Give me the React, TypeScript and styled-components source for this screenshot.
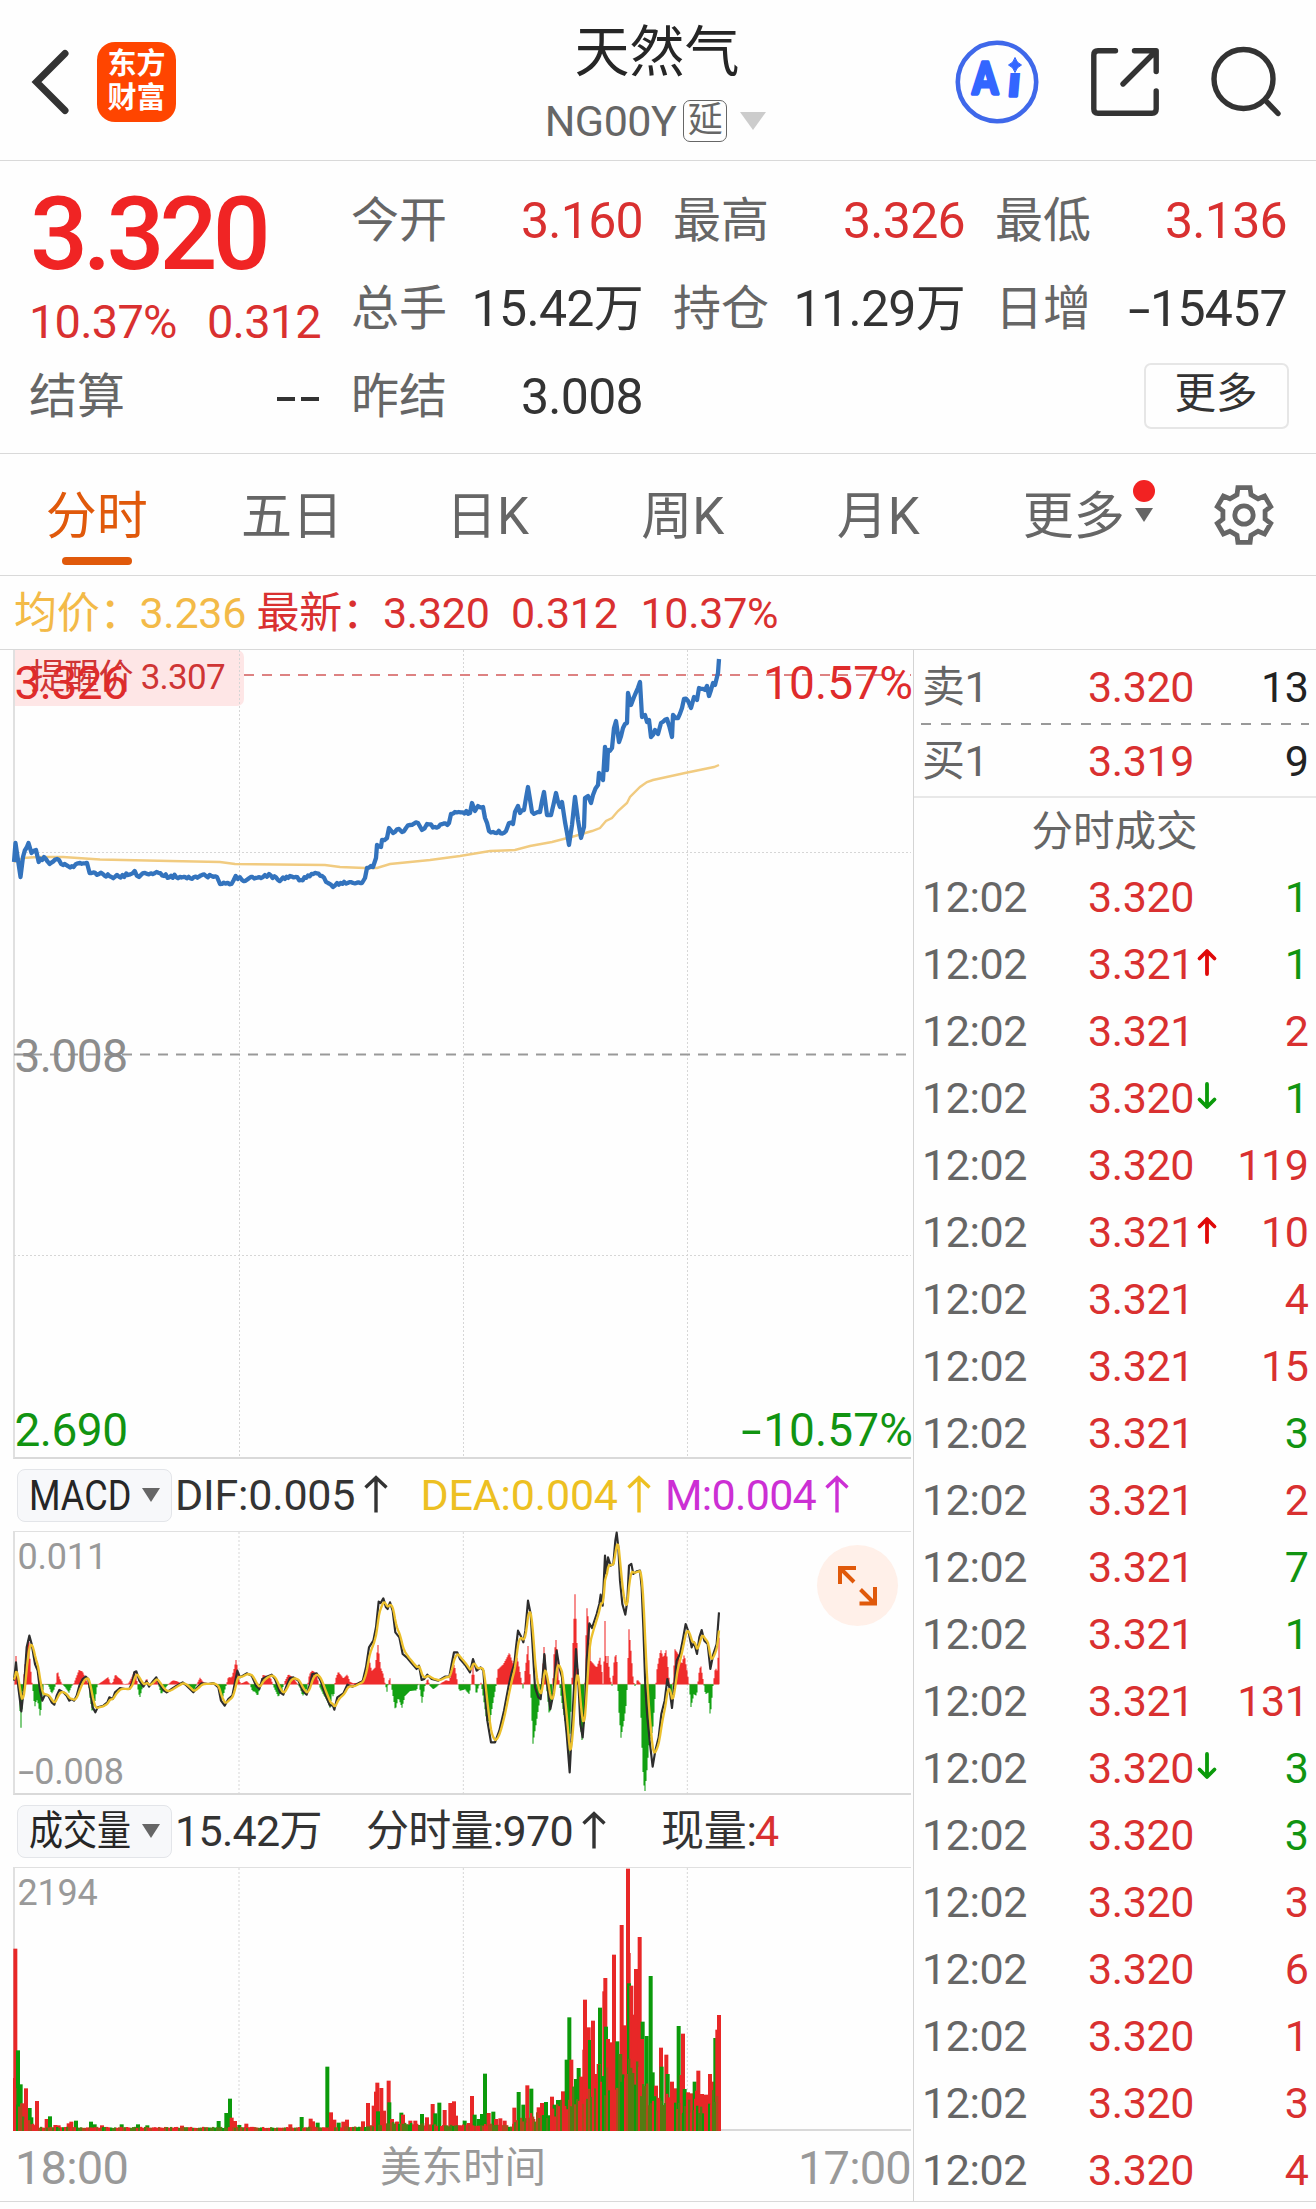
import React from "react";
import styled, { createGlobalStyle } from "styled-components";

const RED = "#d93030";
const GREEN = "#119411";
const INK = "#333333";
const GRAY = "#666666";
const MUTED = "#999999";
const ORANGE = "#e0590b";
const LINE = "#d9d9d9";

const GlobalStyle = createGlobalStyle`
  * { box-sizing: border-box; }
  html, body { margin: 0; background: #fefefe; }
  body { font-family: Roboto, "Noto Sans CJK SC", sans-serif; color: ${INK}; }
`;

const Page = styled.main`
  width: 1316px;
  height: 2209px;
  overflow: hidden;
  background: #fefefe;
`;

/* ---------- header ---------- */

const Header = styled.header`
  display: grid;
  grid-template-columns: 1fr auto 1fr;
  height: 161px;
  border-bottom: 1px solid ${LINE};
`;

const HeaderSide = styled.div<{ $end?: boolean }>`
  display: flex;
  align-items: center;
  justify-content: ${(p) => (p.$end ? "flex-end" : "flex-start")};
  gap: ${(p) => (p.$end ? "52px" : "28.5px")};
  padding: ${(p) => (p.$end ? "3px 35px 0 0" : "3px 0 0 30.5px")};
`;

const Brand = styled.div`
  display: flex;
  flex-direction: column;
  align-items: center;
  justify-content: center;
  width: 79px;
  height: 80px;
  padding-bottom: 1px;
  border-radius: 18px;
  background: #ff4500;
  color: #fff;
  font-size: 29px;
  font-weight: 700;
  line-height: 34px;
`;

const Titles = styled.div`
  display: flex;
  flex-direction: column;
  align-items: center;
  padding-top: 17px;
`;

const Title = styled.h1`
  margin: 0 2px 0 0;
  font-size: 55px;
  font-weight: 400;
  line-height: 70px;
  color: #262626;
`;

const Symbol = styled.div`
  display: flex;
  align-items: center;
  height: 68px;
  margin-right: 5px;
  font-size: 43px;
  line-height: 68px;
  letter-spacing: -0.5px;
  color: ${GRAY};
`;

const DelayTag = styled.span`
  display: flex;
  align-items: center;
  justify-content: center;
  width: 44px;
  height: 42px;
  margin: 0 13px 0 7px;
  border: 1.5px solid ${GRAY};
  border-radius: 7px;
  font-size: 35px;
  line-height: 38px;
  letter-spacing: 0;
`;

/* ---------- quote ---------- */

const Quote = styled.section`
  display: grid;
  grid-template-columns: repeat(4, 292px);
  grid-template-rows: repeat(3, 88px);
  column-gap: 30px;
  height: 293px;
  padding: 16px 0 0 29px;
  border-bottom: 1px solid ${LINE};
`;

const Headline = styled.div`
  grid-row: span 2;
`;

const LastPrice = styled.div`
  padding: 7px 0 0 1px;
  font-size: 102px;
  font-weight: 500;
  line-height: 100px;
  letter-spacing: -4.9px;
  color: #f02424;
  white-space: nowrap;
`;

const ChangeRow = styled.div`
  display: flex;
  justify-content: space-between;
  font-size: 47px;
  line-height: 76px;
  letter-spacing: -0.8px;
  color: ${RED};
`;

const Stat = styled.div<{ $color?: string }>`
  display: flex;
  align-items: center;
  justify-content: space-between;
  font-size: 50px;
  line-height: 88px;
  letter-spacing: -0.7px;
  color: ${(p) => p.$color ?? INK};
  white-space: nowrap;
`;

const StatLabel = styled.span`
  font-size: 48px;
  letter-spacing: 0;
  color: ${GRAY};
`;

const Hyphen = styled.span`
  display: inline-block;
  margin: 0 1px 0 8px;
  transform: scaleX(1.6);
  transform-origin: 100% 50%;
`;

const Dashes = styled.span`
  display: flex;
  gap: 6px;
  padding: 4px 2px 0 0;
  &::before,
  &::after {
    content: "";
    width: 18px;
    height: 4px;
    background: ${INK};
  }
`;

const MoreButton = styled.button`
  grid-column: 4;
  justify-self: end;
  align-self: center;
  width: 145px;
  height: 66px;
  margin: 0 -1.5px 2px 0;
  padding: 0 0 4px;
  border: 2px solid #e6e6e6;
  border-radius: 7px;
  background: #fefefe;
  font: 400 41.5px/56px Roboto, "Noto Sans CJK SC", sans-serif;
  color: ${INK};
`;

/* ---------- tabs ---------- */

const Tabs = styled.nav`
  display: flex;
  height: 122px;
  border-bottom: 1px solid ${LINE};
`;

const Tab = styled.div<{ $active?: boolean }>`
  position: relative;
  display: flex;
  align-items: center;
  justify-content: center;
  width: 195.4px;
  padding: 0 2px 5px 0;
  font-size: 51px;
  color: ${(p) => (p.$active ? ORANGE : GRAY)};
  &::after {
    content: "";
    display: ${(p) => (p.$active ? "block" : "none")};
    position: absolute;
    bottom: 10px;
    left: 62px;
    width: 70px;
    height: 8px;
    border-radius: 4px;
    background: ${ORANGE};
  }
`;

const TabMark = styled.svg`
  position: absolute;
  left: 155px;
  top: 25px;
`;

const SettingsTab = styled.div`
  display: flex;
  align-items: center;
  padding-left: 41px;
`;

/* ---------- average / latest line ---------- */

const Legend = styled.div`
  display: flex;
  height: 74px;
  padding-left: 14px;
  border-bottom: 1px solid ${LINE};
  font-size: 43px;
  line-height: 74px;
  letter-spacing: -0.3px;
  white-space: pre;
`;

const LegendItem = styled.span<{ $color: string; $width: number }>`
  width: ${(p) => p.$width}px;
  color: ${(p) => p.$color};
`;

/* ---------- body ---------- */

const Body = styled.section`
  display: flex;
  height: 1552px;
  border-bottom: 1.5px solid ${LINE};
`;

const Charts = styled.div`
  width: 914px;
  padding-left: 13px;
  border-right: 1px solid #d4d4d4;
`;

const Pane = styled.div<{ $h: number }>`
  position: relative;
  width: 898px;
  height: ${(p) => p.$h}px;
  border-left: 2px solid #e0e0e0;
  border-bottom: 2px solid ${LINE};
  border-top: ${(p) => (p.$h < 300 ? "1px solid #e0e0e0" : "none")};
`;

const Plot = styled.svg`
  position: absolute;
  left: -1px;
  top: 0;
  overflow: visible;
`;

const PaneLabel = styled.span<{ $top: number; $right?: boolean; $color: string; $small?: boolean }>`
  position: absolute;
  top: ${(p) => p.$top}px;
  ${(p) => (p.$right ? "right: -2px" : `left: ${p.$small ? 2.5 : -0.5}px`)};
  font-size: ${(p) => (p.$small ? 36 : 46)}px;
  line-height: 50px;
  letter-spacing: ${(p) => (p.$small ? "-0.2px" : p.$right ? "0.1px" : "-0.5px")};
  color: ${(p) => p.$color};
  white-space: nowrap;
`;

const Reminder = styled.div`
  position: absolute;
  left: 0;
  top: 0;
  width: 229px;
  height: 56px;
  padding-left: 15px;
  border-radius: 0 7px 7px 0;
  background: #fee6e6;
  font-size: 35px;
  line-height: 56px;
  letter-spacing: -0.75px;
  color: #cf3535;
  white-space: pre;
`;

const ExpandButton = styled.button`
  position: absolute;
  left: 802px;
  top: 13px;
  width: 81px;
  height: 81px;
  padding: 0;
  border: 0;
  border-radius: 50%;
  background: #fff0e9;
`;

const IndicatorBar = styled.div`
  display: flex;
  align-items: center;
  height: 72px;
  padding-left: 4px;
  font-size: 43px;
  line-height: 58px;
  letter-spacing: -0.2px;
  white-space: nowrap;
`;

const Picker = styled.button`
  display: flex;
  align-items: center;
  width: 155px;
  height: 53px;
  margin-right: 3px;
  padding: 0 0 0 11px;
  border: 1.5px solid #e3e5e9;
  border-radius: 8px;
  background: #f7f8fa;
  color: #262626;
`;

const PickerText = styled.span<{ $size: number }>`
  width: 112.5px;
  text-align: left;
  font: 400 ${(p) => p.$size}px/46px Roboto, "Noto Sans CJK SC", sans-serif;
  transform: scaleX(0.84);
  transform-origin: 0 50%;
  white-space: nowrap;
`;

const Readout = styled.span<{ $w: number; $color?: string; $tight?: boolean }>`
  display: flex;
  align-items: center;
  width: ${(p) => p.$w}px;
  letter-spacing: ${(p) => (p.$tight ? "-0.7px" : "-0.2px")};
  color: ${(p) => p.$color ?? INK};
`;

const Trend = styled.svg`
  margin: 0 0 2px 8px;
`;

const Axis = styled.div`
  display: flex;
  justify-content: space-between;
  align-items: center;
  width: 898px;
  height: 70px;
  padding: 3px 0 0 2px;
  font-size: 47px;
  line-height: 66px;
  letter-spacing: -0.8px;
  color: ${MUTED};
`;

const AxisTitle = styled.span`
  font-size: 41.5px;
  letter-spacing: 0;
`;

/* ---------- order book & ticks ---------- */

const Side = styled.aside`
  flex: 1;
  height: 1551px;
  overflow: hidden;
  font-size: 43px;
  letter-spacing: -0.4px;
`;

const Row = styled.div<{ $h: number }>`
  display: grid;
  grid-template-columns: 166px 1fr auto;
  align-items: center;
  height: ${(p) => p.$h}px;
  padding: 1px 7.5px 0 8px;
  line-height: 60px;
`;

const Label = styled.span`
  color: ${GRAY};
`;

const Price = styled.span`
  display: flex;
  align-items: center;
  color: ${RED};
`;

const Qty = styled.span<{ $color: string }>`
  color: ${(p) => p.$color};
`;

const TickArrow = styled.svg`
  margin: 0 0 4px -0.5px;
`;

const BookDivider = styled.div`
  height: 2px;
  margin: 0 7px;
  background: repeating-linear-gradient(90deg, #999 0 10px, transparent 10px 20px);
`;

const SideTitle = styled.div`
  height: 67px;
  padding-right: 1px;
  border-top: 2px solid #e8e8e8;
  text-align: center;
  font-size: 41.5px;
  line-height: 67px;
  letter-spacing: 0;
  color: ${GRAY};
`;

/* ---------- data ---------- */

type Pt = [number, number];

const pairs = (s: string): Pt[] =>
  s.trim().split(/\s+/).map((p) => p.split(",").map(Number) as Pt);

const rng = (seed: number) => () => {
  seed = (seed * 16807) % 2147483647;
  return seed / 2147483647;
};

const valueAt = (pts: Pt[], x: number) => {
  let i = 1;
  while (i < pts.length - 1 && pts[i][0] < x) i++;
  const [x0, y0] = pts[i - 1];
  const [x1, y1] = pts[i];
  return y0 + ((y1 - y0) * Math.min(1, Math.max(0, (x - x0) / (x1 - x0))));
};

const toPath = (pts: Pt[]) => "M" + pts.map(([x, y]) => `${x.toFixed(1)} ${y.toFixed(1)}`).join("L");

const PRICE = pairs(`14,862 15.5,843 18,860 20.5,877 23,857 28.5,843 31.5,853 36,850 38.7,862 44,857 49.6,864 57,859 63,865
73.6,867 80,863 87,863 89.6,873 99,874 111.5,877 128,875 134.7,871 139,877 145,873 156.5,872 164,876 185,877 194,877 206,876
217,877 220,884 231.5,884 235.7,876 242,880 252.5,877 261,878 269,874 278,880 290,876 301,880 311.5,874 322,876 328,883
333,887 337,883 362,883 365,878 367,868 373,867 376,858 377,845 381,847 382,840 387,838 389,828 393,833 399,829 402,832
410,825 418,823 422,830 427,824 435,827 449,823 451,814 455,812 470,813 472,803 475,811 478,806 483,807 485,818 489,831
497,833 506,831 509,823 513,824 515,812 518,806 520,813 524,810 528,787 532,812 540,812 544,792 547,815 551,815 556,793
560,807 562,802 565,822 569,845 572,825 575,797 578,820 581,838 584,827 585,798 588,796 591,803 593,795 598,785 599,773
603,780 605,747 607,770 608,750 612,748 614,728 616,721 619,742 623,728 627,723 628,693 631,705 634,697 640,682 642,717
645,715 647,722 649,720 651,737 655,730 658,734 661,723 667,719 672,737 673,715 678,718 682,708 684,699 688,701 691,708
694,697 697,700 699,688 705,690 707,686 709,696 713,683 715,685 718,673 719,659`);

const AVERAGE = pairs(`14,862 23,858 38,857 63,857 100,859.5 170,861 220,862 235,864 325,865 340,867 365,868 377,868 390,864
430,860 460,856 490,851 515,850 530,846 552,842 575,836 592,831 600,828 606,821 612,818 618,811 627,803 630,797 640,787
647,782 653,780 685,773 714,767 719,765`);

const DIF = pairs(`42,720 48,665 55,740 64,812 72,740 80,620 88,585 95,610 105,670 113,690 120,750 127,780 135,762 145,765
155,785 163,792 170,765 178,748 190,755 200,765 208,780 215,775 222,780 230,765 238,735 248,715 257,708 265,715 272,760
278,800 286,815 293,800 310,795 322,785 328,770 338,775 345,755 360,742 375,745 388,745 397,725 403,695 409,692 418,720
430,738 440,722 447,738 460,720 469,710 478,730 490,748 500,755 515,745 530,735 548,725 560,735 580,755 592,740 605,728
625,730 640,727 655,740 663,780 674,795 685,775 697,765 705,725 712,690 720,710 740,698 755,705 768,735 778,745 787,715
800,708 815,702 825,715 840,755 850,762 860,735 870,712 880,710 895,720 908,750 920,762 930,730 937,700 950,698 962,720
975,760 990,795 998,793 1003,807 1012,770 1030,758 1042,732 1058,738 1075,728 1088,722 1098,680 1107,620 1120,600
1128,560 1136,483 1142,487 1150,473 1158,500 1163,505 1170,485 1178,510 1186,575 1198,590 1208,640 1220,650 1235,668
1250,685 1257,675 1265,718 1273,715 1282,702 1295,715 1315,720 1335,708 1348,708 1355,670 1362,635 1372,635 1380,655
1395,672 1410,695 1419,655 1430,690 1442,680 1450,690 1455,760 1462,840 1473,905 1485,905 1498,870 1512,810 1525,740
1535,695 1543,670 1548,620 1554,570 1562,585 1570,605 1576,570 1584,480 1592,520 1598,620 1605,740 1615,770 1622,775
1627,720 1633,640 1640,720 1651,805 1660,760 1670,630 1678,680 1686,710 1692,800 1700,880 1709,995 1715,880 1722,740
1728,625 1735,720 1741,850 1748,890 1755,800 1760,660 1768,548 1776,562 1790,520 1798,490 1802,462 1808,495 1815,345
1819,400 1824,350 1832,375 1840,370 1846,300 1850,276 1855,320 1860,420 1867,490 1876,522 1882,480 1887,375 1894,370
1900,400 1910,392 1920,390 1925,440 1930,560 1936,740 1942,830 1950,910 1958,978 1966,930 1976,890 1984,820 1994,780
2002,715 2008,740 2016,802 2022,740 2030,660 2040,640 2048,600 2057,550 2066,575 2075,620 2082,605 2091,640 2098,590
2105,568 2113,600 2123,610 2131,685 2140,640 2150,610 2157,515`);

const HISTOGRAM = pairs(`42,0 48,85 53,10 57,-30 63,-130 69,-20 72,30 80,110 86,145 91,60 96,5 98,-10 104,-70 110,-45 115,-60
121,-100 127,-30 132,0 145,-2 155,-28 163,-15 168,5 172,43 178,20 185,3 195,-8 207,-25 215,-5 222,3 230,25 237,43 248,38
258,15 266,0 270,-40 277,-85 285,-50 292,-2 300,4 312,12 325,22 331,2 338,4 346,30 355,20 364,14 370,0 385,2 395,20 404,42
410,20 413,-10 419,-42 426,-15 432,0 440,18 446,2 455,3 468,20 475,0 484,-30 495,-12 505,0 518,12 530,10 545,2 560,-2
580,-25 590,0 600,20 610,6 640,0 655,-5 662,-45 668,-40 678,-5 685,22 695,20 703,50 709,78 715,20 722,2 740,10 750,0
757,-20 765,-22 773,-35 780,-10 788,28 800,25 812,20 820,-5 835,-38 845,-20 855,10 865,30 880,20 890,5 900,-10 908,-35
920,-20 928,30 937,42 950,30 958,-5 970,-30 982,-50 990,-70 996,-30 1001,-40 1006,15 1015,38 1030,18 1042,30 1050,8
1060,3 1075,5 1090,15 1098,40 1108,75 1115,40 1125,50 1134,118 1142,50 1150,30 1156,0 1161,-22 1166,10 1170,18 1175,-10
1186,-78 1195,-40 1206,-70 1215,-35 1230,-20 1250,-18 1256,5 1259,-10 1266,-55 1275,-5 1283,18 1290,-5 1300,-15 1315,-3
1325,5 1338,12 1348,10 1356,45 1363,60 1372,10 1378,-20 1395,-15 1408,-30 1414,5 1419,65 1424,5 1429,-32 1436,-5 1443,5
1450,-40 1460,-110 1470,-110 1480,-50 1488,-5 1494,45 1510,60 1528,95 1540,60 1547,95 1555,65 1563,20 1570,-18 1575,40
1584,115 1590,30 1593,-40 1599,-178 1610,-110 1622,-30 1627,30 1633,128 1640,-10 1648,-95 1657,-30 1662,90 1669,140
1676,20 1685,-50 1695,-110 1707,-215 1714,-60 1718,100 1725,270 1732,100 1738,-60 1745,-175 1753,-110 1757,120 1761,228
1767,180 1773,70 1790,50 1800,80 1807,30 1810,-12 1815,190 1819,50 1824,85 1830,20 1837,-8 1841,60 1847,95 1852,60
1855,-60 1863,-160 1872,-110 1880,-50 1883,50 1887,165 1894,90 1900,10 1906,-8 1912,15 1920,5 1923,-100 1928,-250
1934,-330 1940,-270 1948,-170 1958,-140 1966,-30 1970,40 1982,105 1990,80 1999,105 2007,20 2015,-65 2021,40 2025,105
2035,90 2045,60 2053,90 2063,30 2068,-5 2073,-68 2082,-30 2090,-35 2096,30 2102,60 2110,10 2116,-30 2124,-25 2131,-98
2139,-5 2146,50 2152,40 2157,140`);

const VOLUME = `r39,862 r40,474 g48,779 g56,881 r62,938 g83,952 r72,893 g88,980 r105,931 r134,985 g144,977 r160,1003 r170,1004
r200,998 r208,993 g222,990 g267,993 g278,1001 r300,1004 g359,1001 g408,1001 g436,1004 r540,1005 g650,991 g673,967 g684,924
r689,981 r699,991 g712,1003 r733,999 r865,1001 g899,979 r926,984 r933,992 g947,996 g976,828 r987,965 r997,987 g1010,996
r1024,993 r1035,987 r1083,992 r1098,937 r1115,945 r1122,903 r1126,876 r1138,892 g1128,962 r1146,960 r1160,870 g1162,935
r1170,985 r1185,993 g1198,966 r1203,972 r1225,990 r1240,990 g1260,970 r1275,980 r1292,940 g1300,968 g1312,936 r1328,958
r1345,937 r1356,932 r1362,975 g1388,990 r1400,997 r1410,916 g1418,972 g1430,985 g1440,970 g1449,849 r1460,967 g1474,963
r1482,985 r1495,983 r1508,990 r1537,951 g1550,904 g1564,942 r1576,884 g1588,894 r1594,985 r1610,950 r1620,937 g1632,934
r1650,918 g1658,942 g1668,928 r1683,902 g1694,807 g1702,680 r1708,807 g1722,865 g1730,832 r1738,858 r1747,777 r1749,627
r1760,710 g1764,748 r1773,690 r1782,850 g1794,651 r1790,820 r1807,602 r1810,562 g1812,708 r1818,745 r1828,755 r1836,492
g1846,752 r1859,403 m1855,790 r1868,704 r1878,234 r1880,487 g1881,578 r1888,585 r1895,672 r1902,535 r1913,439 g1922,693
r1920,745 g1934,736 g1946,556 g1952,845 r1962,885 r1977,771 g1979,828 r1993,792 g1997,850 r2010,873 r2022,893 g2030,706
r2039,853 r2043,729 g2048,895 r2058,905 r2070,908 g2078,873 r2085,900 r2089,840 r2100,910 r2112,912 r2124,850 r2132,873
g2140,742 r2146,717 r2151,673`
  .split(/\s+/)
  .map((s) => {
    const [x, y] = s.slice(1).split(",").map(Number);
    return { tone: s[0], x, y };
  });

const VOLUME_FLOOR = pairs(`42,130 60,90 90,25 110,12 900,12 1100,15 1180,28 1330,18 1500,22 1530,15 1560,45 1640,60 1690,110 1730,130
1770,190 1840,200 1900,200 1950,140 1980,105 2100,95 2157,130`);

const TONES: Record<string, string> = { r: "#e82727", g: "#0b9a0b", m: "#557a12", d: "#b04a1c" };

const TICKS: [string, string, string, "r" | "g"][] = [
  ["3.320", "", "1", "g"],
  ["3.321", "up", "1", "g"],
  ["3.321", "", "2", "r"],
  ["3.320", "down", "1", "g"],
  ["3.320", "", "119", "r"],
  ["3.321", "up", "10", "r"],
  ["3.321", "", "4", "r"],
  ["3.321", "", "15", "r"],
  ["3.321", "", "3", "g"],
  ["3.321", "", "2", "r"],
  ["3.321", "", "7", "g"],
  ["3.321", "", "1", "g"],
  ["3.321", "", "131", "r"],
  ["3.320", "down", "3", "g"],
  ["3.320", "", "3", "g"],
  ["3.320", "", "3", "r"],
  ["3.320", "", "6", "r"],
  ["3.320", "", "1", "r"],
  ["3.320", "", "3", "r"],
  ["3.320", "", "4", "r"],
];

/* ---------- drawings ---------- */

function PriceChart() {
  const rand = rng(11);
  const line: Pt[] = [];
  PRICE.forEach(([x, y], i) => {
    if (i) {
      const [px, py] = PRICE[i - 1];
      const n = Math.floor((x - px) / 1.7);
      for (let k = 1; k < n; k++) {
        line.push([px + ((x - px) * k) / n, py + ((y - py) * k) / n + (rand() - 0.5) * 3.6]);
      }
    }
    line.push([x, y]);
  });
  return (
    <Plot width="897" height="807" viewBox="14 650 897 807">
      <g stroke="#d6d6d6" strokeWidth="1" strokeDasharray="2 2">
        <path d="M239.5 650V1457M463.5 650V1457M687.5 650V1457M14 852.5H911M14 1255.5H911" />
      </g>
      <path d="M244 675H911" stroke="#dd8282" strokeWidth="2" strokeDasharray="10 8" />
      <path d="M14 1054.5H906" stroke="#999" strokeWidth="2" strokeDasharray="10 8" />
      <path d={toPath(AVERAGE)} fill="none" stroke="#f1cb80" strokeWidth="2.400" />
      <path d={toPath(line)} fill="none" stroke="#3373bd" strokeWidth="4.300" strokeLinejoin="round" />
    </Plot>
  );
}

function MacdChart() {
  const dea: Pt[] = [];
  let v = 715;
  for (let x = 42; x <= 2157; x += 3) {
    v += (valueAt(DIF, x) - v) * 0.34;
    dea.push([x, v]);
  }
  let up = "";
  let down = "";
  for (let x = 42; x <= 2157; x += 3) {
    const h = valueAt(HISTOGRAM, x);
    const bar = `M${x} 731V${(731 - h).toFixed(1)}`;
    if (h > 0) up += bar;
    else down += bar;
  }
  return (
    <Plot width="897" height="262" viewBox="42 274 2691 786">
      <path d="M717 274V1060M1390 274V1060M2062 274V1060" stroke="#d6d6d6" strokeWidth="3" strokeDasharray="6 6" />
      <path d="M42 731H2157" stroke="#ee6a6a" strokeWidth="2" />
      <path d={up} stroke="#ef2c2c" strokeWidth="3.200" />
      <path d={down} stroke="#12a012" strokeWidth="3.200" />
      <path d={toPath(DIF)} fill="none" stroke="#2d2d2d" strokeWidth="6.500" strokeLinejoin="round" />
      <path d={toPath(dea)} fill="none" stroke="#ecc02c" strokeWidth="7" strokeLinejoin="round" />
    </Plot>
  );
}

function VolumeChart() {
  const rand = rng(29);
  const floor: { x: number; h: number; tone: string }[] = [];
  for (let x = 42; x <= 2148; x += 6) {
    const top = valueAt(VOLUME_FLOOR, x);
    const r = rand();
    const tone = r < 0.34 ? "r" : r < 0.58 ? "d" : r < 0.9 ? "m" : "g";
    floor.push({ x, h: top * (top > 40 ? 0.5 + rand() * 0.6 : 0.75 + rand() * 0.3), tone });
  }
  return (
    <Plot width="897" height="263" viewBox="42 232 2691 789">
      <path d="M717 232V1020M1390 232V1020M2062 232V1020" stroke="#d6d6d6" strokeWidth="3" strokeDasharray="6 6" />
      {VOLUME.map((b, i) => (
        <rect key={i} x={b.x} y={b.y} width="12" height={1021 - b.y} fill={TONES[b.tone]} />
      ))}
      {floor.map((b, i) => (
        <rect key={i} x={b.x} y={1021 - b.h} width="7" height={b.h} fill={TONES[b.tone]} />
      ))}
    </Plot>
  );
}

const Caret = ({ w, h, color }: { w: number; h: number; color: string }) => (
  <svg width={w} height={h} viewBox="0 0 10 10" preserveAspectRatio="none">
    <path d="M0 0H10L5 10Z" fill={color} />
  </svg>
);

const UpArrow = ({ color }: { color: string }) => (
  <Trend width="26" height="38" viewBox="0 0 26 38" fill="none" stroke={color} strokeWidth="3.400">
    <path d="M13 37.500V3M2.500 12.500L13 2.500L23.500 12.500" />
  </Trend>
);

const Direction = ({ dir }: { dir: string }) => (
  <TickArrow width="26" height="28" viewBox="0 0 26 28" fill="none" stroke={dir === "up" ? "#e00808" : "#0a9a0a"} strokeWidth="3.800" strokeLinecap="round" strokeLinejoin="round">
    {dir === "up" ? <path d="M13 26V3.500M5.500 10.500L13 3L20.500 10.500" /> : <path d="M13 2V24.500M5.500 17.500L13 25L20.500 17.500" />}
  </TickArrow>
);

const AiIcon = () => (
  <svg width="84" height="84" viewBox="0 0 84 84">
    <g fill="#3366ff" stroke="#3366ff" strokeWidth="3.600" strokeLinejoin="round" fontFamily="Lato, Roboto, sans-serif" fontWeight="900">
      <text transform="translate(17.500 54) scale(0.82 1)" fontSize="44">A</text>
      <text transform="translate(52.500 56) skewX(-5)" fontSize="44">i</text>
    </g>
    <rect x="51" y="16.500" width="16" height="16.500" fill="#fefefe" />
    <path d="M60 17.500Q61.500 23 66.500 25Q61.500 27 60 32.500Q58.500 27 53.500 25Q58.500 23 60 17.500Z" fill="#3366ff" stroke="#3366ff" strokeWidth="1" />
    <circle cx="42" cy="42" r="39.200" fill="none" stroke="#3f68ea" strokeWidth="4.600" />
  </svg>
);

const gearPath = () => {
  const pts: string[] = [];
  for (let i = 0; i < 6; i++) {
    const a = (i * Math.PI) / 3 - Math.PI / 2;
    const at = (d: number, r: number) => `${(31 + r * Math.cos(a + d)).toFixed(1)} ${(31 + r * Math.sin(a + d)).toFixed(1)}`;
    pts.push(at(-0.33, 21.5), at(-0.22, 28), at(0.22, 28), at(0.33, 21.5));
  }
  return "M" + pts.join("L") + "Z";
};

const GearIcon = () => (
  <svg width="62" height="62" viewBox="0 0 62 62" fill="none" stroke={GRAY} strokeWidth="4.800">
    <path d={gearPath()} />
    <circle cx="31" cy="31" r="9.200" />
  </svg>
);

export default function App() {
  return (
    <>
      <GlobalStyle />
      <Page>
        <Header>
          <HeaderSide>
            <svg width="38" height="66" viewBox="0 0 38 66" fill="none" stroke={INK} strokeWidth="7" strokeLinecap="round">
              <path d="M34 4.500L5.500 33L34 61.500" strokeLinejoin="miter" />
            </svg>
            <Brand>
              <span>东方</span>
              <span>财富</span>
            </Brand>
          </HeaderSide>
          <Titles>
            <Title>天然气</Title>
            <Symbol>
              NG00Y<DelayTag>延</DelayTag>
              <Caret w={26} h={18} color="#cccccc" />
            </Symbol>
          </Titles>
          <HeaderSide $end>
            <AiIcon />
            <svg width="68" height="68" viewBox="0 0 68 68" fill="none" stroke={INK} strokeWidth="5.400" strokeLinecap="round" strokeLinejoin="round">
              <path d="M24.500 2.800H7Q2.800 2.800 2.800 7V61Q2.800 65.200 7 65.200H61Q65.200 65.200 65.200 61V43" />
              <path d="M43.500 2.800H65.200V23.500M64 4L32 36" />
            </svg>
            <svg width="70" height="72" viewBox="0 0 70 72" fill="none" stroke={INK} strokeWidth="5.400" strokeLinecap="round">
              <circle cx="32.500" cy="33" r="29.500" />
              <path d="M55 55L67 67.500" />
            </svg>
          </HeaderSide>
        </Header>

        <Quote>
          <Headline>
            <LastPrice>3.320</LastPrice>
            <ChangeRow>
              <span>10.37%</span>
              <span>0.312</span>
            </ChangeRow>
          </Headline>
          <Stat $color={RED}><StatLabel>今开</StatLabel>3.160</Stat>
          <Stat $color={RED}><StatLabel>最高</StatLabel>3.326</Stat>
          <Stat $color={RED}><StatLabel>最低</StatLabel>3.136</Stat>
          <Stat><StatLabel>总手</StatLabel>15.42万</Stat>
          <Stat><StatLabel>持仓</StatLabel>11.29万</Stat>
          <Stat><StatLabel>日增</StatLabel><span><Hyphen>-</Hyphen>15457</span></Stat>
          <Stat><StatLabel>结算</StatLabel><Dashes /></Stat>
          <Stat><StatLabel>昨结</StatLabel>3.008</Stat>
          <MoreButton>更多</MoreButton>
        </Quote>

        <Tabs>
          <Tab $active>分时</Tab>
          <Tab>五日</Tab>
          <Tab>日K</Tab>
          <Tab>周K</Tab>
          <Tab>月K</Tab>
          <Tab>
            更多
            <TabMark width="24" height="46" viewBox="0 0 24 46">
              <circle cx="12" cy="12" r="11" fill="#f22222" />
              <path d="M3 29H21L12 43Z" fill={GRAY} />
            </TabMark>
          </Tab>
          <SettingsTab><GearIcon /></SettingsTab>
        </Tabs>

        <Legend>
          <LegendItem $color="#f3ba48" $width={125.5}>均价：</LegendItem>
          <LegendItem $color="#f3ba48" $width={117}>3.236</LegendItem>
          <LegendItem $color={RED} $width={126.5}>最新：</LegendItem>
          <LegendItem $color={RED} $width={128}>3.320</LegendItem>
          <LegendItem $color={RED} $width={129.5}>0.312</LegendItem>
          <LegendItem $color={RED} $width={150}>10.37%</LegendItem>
        </Legend>

        <Body>
          <Charts>
            <Pane $h={809}>
              <Reminder>提醒价 3.307</Reminder>
              <PriceChart />
              <PaneLabel $top={8} $color="#df2b2b">3.326</PaneLabel>
              <PaneLabel $top={8} $right $color="#df2b2b">10.57%</PaneLabel>
              <PaneLabel $top={381} $color="#8c8c8c">3.008</PaneLabel>
              <PaneLabel $top={755} $color={GREEN}>2.690</PaneLabel>
              <PaneLabel $top={755} $right $color={GREEN}><Hyphen>-</Hyphen>10.57%</PaneLabel>
            </Pane>
            <IndicatorBar>
              <Picker>
                <PickerText $size={43}>MACD</PickerText>
                <Caret w={18} h={14} color={GRAY} />
              </Picker>
              <Readout $w={245.5}>DIF:0.005<UpArrow color={INK} /></Readout>
              <Readout $w={244.5} $color="#edc022">DEA:0.004<UpArrow color="#edc022" /></Readout>
              <Readout $w={190} $color="#cc2fd4" $tight>M:0.004<UpArrow color="#cc2fd4" /></Readout>
            </IndicatorBar>
            <Pane $h={264}>
              <MacdChart />
              <PaneLabel $top={0} $small $color={MUTED}>0.011</PaneLabel>
              <PaneLabel $top={215} $small $color={MUTED}><Hyphen style={{ marginLeft: 6 }}>-</Hyphen>0.008</PaneLabel>
              <ExpandButton aria-label="expand">
                <svg width="81" height="81" viewBox="0 0 81 81" fill="none" stroke={ORANGE} strokeWidth="4">
                  <path d="M23 39V23H39M23.500 23.500L37 37M43.500 44.500L58 59M58 42V58.500H42.500" />
                </svg>
              </ExpandButton>
            </Pane>
            <IndicatorBar>
              <Picker>
                <PickerText $size={40.5}>成交量</PickerText>
                <Caret w={18} h={14} color={GRAY} />
              </Picker>
              <Readout $w={191} $tight>15.42万</Readout>
              <Readout $w={295} $tight>分时量:970<UpArrow color={INK} /></Readout>
              <Readout $w={94}>现量:</Readout>
              <Readout $w={30} $color={RED}>4</Readout>
            </IndicatorBar>
            <Pane $h={264}>
              <VolumeChart />
              <PaneLabel $top={0} $small $color={MUTED}>2194</PaneLabel>
            </Pane>
            <Axis>
              <span>18:00</span>
              <AxisTitle>美东时间</AxisTitle>
              <span>17:00</span>
            </Axis>
          </Charts>
          <Side>
            <Row $h={73}>
              <Label>卖1</Label>
              <Price>3.320</Price>
              <Qty $color="#222">13</Qty>
            </Row>
            <BookDivider />
            <Row $h={71}>
              <Label>买1</Label>
              <Price>3.319</Price>
              <Qty $color="#222">9</Qty>
            </Row>
            <SideTitle>分时成交</SideTitle>
            {TICKS.map(([price, dir, qty, tone], i) => (
              <Row key={i} $h={67}>
                <Label>12:02</Label>
                <Price>
                  {price}
                  {dir && <Direction dir={dir} />}
                </Price>
                <Qty $color={tone === "r" ? RED : GREEN}>{qty}</Qty>
              </Row>
            ))}
          </Side>
        </Body>
      </Page>
    </>
  );
}
